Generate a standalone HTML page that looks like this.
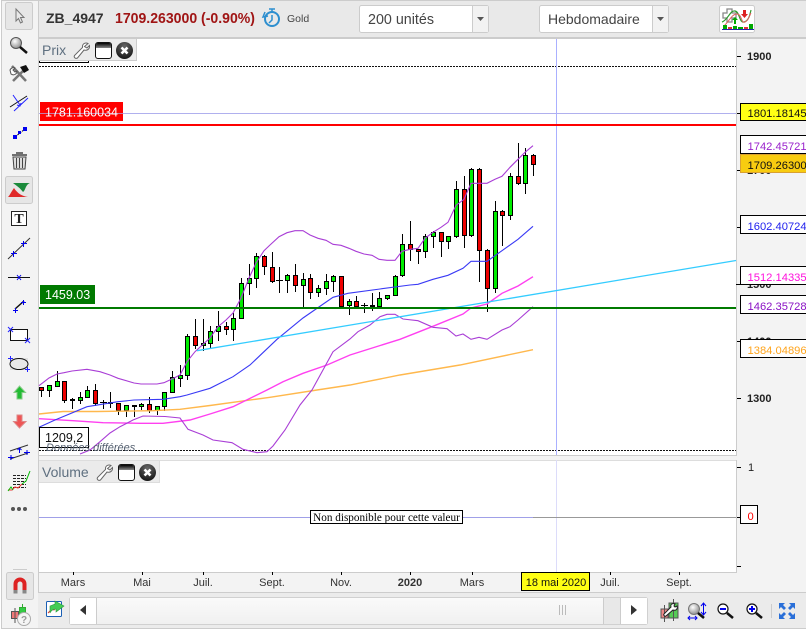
<!DOCTYPE html>
<html><head><meta charset="utf-8"><style>
html,body{margin:0;padding:0;background:#fff}
svg{display:block}
text{font-family:"Liberation Sans",sans-serif}
</style></head><body>
<svg xmlns="http://www.w3.org/2000/svg" width="806" height="631" viewBox="0 0 806 631">
<defs>
<linearGradient id="win" x1="0" y1="0" x2="0" y2="1"><stop offset="0" stop-color="#000"/><stop offset="1" stop-color="#888"/></linearGradient>
<radialGradient id="cl" cx=".5" cy=".25" r=".8"><stop offset="0" stop-color="#666"/><stop offset="1" stop-color="#111"/></radialGradient>
<radialGradient id="lens" cx=".4" cy=".35" r=".7"><stop offset="0" stop-color="#fff"/><stop offset="1" stop-color="#888"/></radialGradient>
<linearGradient id="thumb" x1="0" y1="0" x2="0" y2="1"><stop offset="0" stop-color="#fafafa"/><stop offset="1" stop-color="#f0f0f0"/></linearGradient>
<g id="wrench"><path d="M15 1.500c-3-1.500-6 .5-5.500 4L1.500 13.500c-1 2 1 3.500 3 2.500L11 8c3 1 6-1 5.500-4.500L14 6l-2.500-1.500z" fill="#fff" stroke="#666" stroke-width="1"/></g>
<g id="window"><rect x=".5" y=".5" width="16" height="16" rx="2.500" fill="#fff" stroke="#111"/><path d="M1 6V3a2 2 0 0 1 2-2h11a2 2 0 0 1 2 2v3z" fill="url(#win)"/></g>
<g id="close"><circle cx="8.500" cy="8.500" r="8.500" fill="url(#cl)"/><path d="M5.500 5.500l6 6M11.500 5.500l-6 6" stroke="#fff" stroke-width="2.600"/></g>
</defs>

<rect width="806" height="631" fill="#fff"/>
<!-- frame backgrounds -->
<rect x="1" y="0" width="805" height="629" fill="#f3f3f3"/>
<rect x="1" y="0" width="805" height="1" fill="#ccc"/>
<rect x="1" y="0" width="1" height="629" fill="#ccc"/>
<rect x="1" y="628" width="805" height="1" fill="#ccc"/>
<rect x="38" y="1" width="768" height="36" fill="#e9e9e9"/>
<rect x="38" y="37" width="768" height="2" fill="#ccc"/>
<rect x="38" y="0" width="1" height="629" fill="#ccc"/>

<!-- chart panes -->
<rect x="39" y="39" width="697" height="416" fill="#fff"/>
<rect x="39" y="455" width="697" height="1" fill="#ccc"/>
<rect x="39" y="460" width="697" height="112" fill="#fff"/>
<rect x="39" y="460" width="697" height="1" fill="#ddd"/>
<rect x="39" y="572" width="697" height="1" fill="#ccc"/>
<rect x="736" y="39" width="1" height="417" fill="#ccc"/>
<rect x="736" y="460" width="1" height="113" fill="#ccc"/>
<rect x="38" y="592" width="768" height="36" fill="#ebebeb"/>
<rect x="38" y="592" width="768" height="1" fill="#ccc"/>

<!-- reference lines under candles -->
<path d="M39 66.500H736M39 450.500H736" stroke="#111" stroke-width="1" stroke-dasharray="2 1" fill="none"/>
<path d="M39 113.500H736" stroke="#b0b0ee" fill="none"/>
<path d="M556.500 39V455" stroke="#aab0ff" fill="none"/>
<path d="M556.500 460V572" stroke="#dcdcfa" fill="none"/>

<!-- wicks -->
<path fill="none" stroke="#000" stroke-width="1" d="M41.500 387V397M49.500 385V397M57.500 371V387M64.500 381V403M72.500 398V409M80.500 392V404M87.500 386V398M95.500 384V406M103.500 400V409M100 402.500H107M110.500 392V408M118.500 403V415M126.500 405V417M134.500 405V417M141.500 403V410M149.500 397V413M157.500 406V415M164.500 392V411M172.500 371V393M180.500 365V387M187.500 334V380M195.500 319V349M203.500 319V351M210.500 326V348M218.500 311V341M226.500 322V335M233.500 313V341M241.500 278V319M249.500 264V295M256.500 253V288M264.500 255V275M272.500 252V283M279.500 267V293M276 280.500H283M287.500 274V293M295.500 264V292M303.500 273V308M310.500 274V299M318.500 285V297M326.500 274V295M333.500 275V292M341.500 276V307M349.500 299V315M356.500 296V307M364.500 303V313M361 305.500H368M372.500 293V311M379.500 292V307M387.500 295V300M395.500 275V296M402.500 234V277M410.500 221V261M418.500 249V264M425.500 234V258M433.500 231V248M441.500 232V257M448.500 236V249M456.500 181V238M464.500 176V248M471.500 168V237M479.500 168V282M487.500 249V312M495.500 201V293M502.500 210V246M510.500 173V220M518.500 143V185M525.500 148V194M533.500 154V176"/>
<!-- green bodies -->
<path fill="#00ee00" stroke="#000" stroke-width="1" d="M47.500 385.500h4v5h-4zM55.500 381.500h4v5h-4zM70.500 399.500h4v1h-4zM78.500 397.500h4v3h-4zM85.500 390.500h4v7h-4zM124.500 405.500h4v5h-4zM139.500 404.500h4v2h-4zM155.500 406.500h4v4h-4zM162.500 392.500h4v14h-4zM170.500 377.500h4v15h-4zM178.500 375.500h4v3h-4zM185.500 336.500h4v39h-4zM201.500 343.500h4v2h-4zM208.500 331.500h4v12h-4zM216.500 326.500h4v5h-4zM231.500 318.500h4v11h-4zM239.500 283.500h4v35h-4zM247.500 278.500h4v5h-4zM254.500 256.500h4v22h-4zM285.500 275.500h4v5h-4zM301.500 279.500h4v6h-4zM316.500 288.500h4v4h-4zM324.500 281.500h4v7h-4zM331.500 276.500h4v5h-4zM347.500 301.500h4v4h-4zM377.500 298.500h4v8h-4zM385.500 295.500h4v3h-4zM393.500 276.500h4v19h-4zM400.500 244.500h4v31h-4zM423.500 236.500h4v15h-4zM431.500 232.500h4v4h-4zM446.500 236.500h4v5h-4zM454.500 189.500h4v47h-4zM469.500 169.500h4v66h-4zM493.500 211.500h4v77h-4zM508.500 176.500h4v39h-4zM523.500 155.500h4v28h-4z"/>
<!-- red bodies -->
<path fill="#ee0000" stroke="#000" stroke-width="1" d="M39.500 387.500h4v3h-4zM62.500 381.500h4v19h-4zM93.500 390.500h4v13h-4zM108.500 402.500h4v1h-4zM116.500 403.500h4v7h-4zM132.500 405.500h4v1h-4zM147.500 404.500h4v6h-4zM193.500 336.500h4v9h-4zM224.500 326.500h4v3h-4zM262.500 256.500h4v10h-4zM270.500 267.500h4v14h-4zM293.500 275.500h4v10h-4zM308.500 278.500h4v14h-4zM339.500 276.500h4v30h-4zM354.500 301.500h4v5h-4zM370.500 305.500h4v1h-4zM408.500 244.500h4v5h-4zM416.500 249.500h4v2h-4zM439.500 232.500h4v9h-4zM462.500 189.500h4v46h-4zM477.500 169.500h4v81h-4zM485.500 250.500h4v38h-4zM500.500 211.500h4v4h-4zM516.500 176.500h4v7h-4zM531.500 155.500h4v9h-4z"/>

<!-- indicator lines -->
<path fill="none" stroke="#ffb84d" stroke-width="1.400" d="M39 414L63 411.500 97 411.500 153 410.700 180 409.300 210 405.500 270 397.300 317 390 350 385 400 375 460 365 533 349.700"/>
<path fill="none" stroke="#ff40f0" stroke-width="1.400" d="M39 418.700L73 420.700 103 422.700 140 423.300 163 423.300 190 420 210 414 233 406.700 267 390 283 381.700 303 373.300 327 365 350 355 400 339.300 432 326.700 463 314 471 308 487 304 502 293.300 518 286 533 276.700"/>
<path fill="none" stroke="#3a3af5" stroke-width="1.100" d="M39 427.300L55 420 87 406.700 118 401.700 134 400 163 399.300 180 396.700 187 395 210 388.300 233 376.700 250 365 277 339.300 303 318 333 297.300 348 293.300 380 289 410 285 418 284.300 433 279.300 448 275.300 463 268.300 471 261.300 487 261.300 502 250.700 518 239.300 533 226.300"/>
<path fill="none" stroke="#a93ed6" stroke-width="1.100" d="M39 385.700L49 378 57 374 64 372.700 72 371 87 369.300 100 371.700 110 375 118 378.300 134 383 141 384 157 384 164 382.700 172 379 180 375 187 361.700 195 351.700 203 344.300 210 338 218 326.700 226 320 233 313 241 298 249 278 256 263 264 250.700 270 245 279 236.700 287 232.700 295 230.700 303 230.700 310 235 318 238.300 326 240.300 333 244.300 341 245.300 349 248.300 356 251.300 364 254 372 255.300 379 259.300 387 260.300 395 260.300 402 251.300 410 249.300 418 248.300 425 238.300 433 232.300 441 227.300 448 222.300 456 205.300 464 199.300 471 183.300 487 183.300 495 179.300 502 176.300 510 167.300 518 159.300 525 152.300 533 145.700"/>
<path fill="none" stroke="#a93ed6" stroke-width="1.100" d="M80 454L90 450 100 441.700 110 433 120 426.700 133 420 143 416 165 416.500 180 418 188 429.300 203 435 213 440 232 442.700 243 449.300 257 452.700 267 451.700 273 446 285 430 300 405 312 390 333 351.700 350 339 358 331.700 370 325 380 316.700 387 314.300 395 314.300 403 319 418 320.700 433 327.300 447 328.700 456 336 463 334 471 339.300 479 337.300 487 339.300 502 330 510 326.700 518 320 533 306.700"/>
<path fill="none" stroke="#33ccff" stroke-width="1.300" d="M197 350.700L736 260.500"/>
<rect x="39" y="124" width="697" height="2" fill="#f00"/>
<rect x="39" y="307" width="697" height="2" fill="#007a00"/>

<!-- price tags on chart -->
<rect x="40" y="102" width="83" height="19" fill="#f00"/>
<path d="M39 113.500H123" stroke="#b0b0ee" opacity=".7"/>
<text x="45" y="116.500" font-size="12.500" fill="#fff">1781.160034</text>
<rect x="40" y="285" width="55" height="19" fill="#007a00"/>
<text x="45" y="299" font-size="12.500" fill="#fff">1459.03</text>
<rect x="39.500" y="427.500" width="49" height="20" fill="#fff" stroke="#000"/>
<text x="45" y="442" font-size="12.500" fill="#111">1209,2</text>
<text x="46" y="451" font-size="11" font-style="italic" fill="#556070">Données différées</text>

<!-- Prix legend -->
<path d="M39.500 58V62.500H88.500V58" fill="none" stroke="#000"/>
<rect x="39" y="39" width="97" height="21" fill="#ebebeb"/>
<rect x="39" y="60" width="98" height="1" fill="#ccc"/>
<rect x="136" y="39" width="1" height="22" fill="#ccc"/>
<text x="42" y="55" font-size="14" fill="#5f7080">Prix</text>
<use href="#wrench" x="73" y="42"/>
<use href="#window" x="95" y="42"/>
<use href="#close" x="116" y="42"/>
<!-- Volume legend -->
<rect x="39" y="461" width="121" height="21" fill="#ebebeb"/>
<rect x="39" y="482" width="121" height="1" fill="#ddd"/>
<rect x="159" y="461" width="1" height="22" fill="#ddd"/>
<text x="42" y="477" font-size="14" fill="#5f7080">Volume</text>
<use href="#wrench" x="96" y="464"/>
<use href="#window" x="118" y="464"/>
<use href="#close" x="139" y="464"/>

<!-- volume line -->
<path d="M39 517.500H533" stroke="#a0a0e8" fill="none"/>
<path d="M533 517.500H736" stroke="#999" fill="none"/>
<rect x="310.500" y="510.500" width="152" height="13" fill="#fff" stroke="#000"/>
<text x="386.500" y="521" font-size="11.200" text-anchor="middle" style="font-family:'Liberation Serif',serif" fill="#000">Non disponible pour cette valeur</text>

<!-- right scale -->
<g stroke="#000" fill="none"><path d="M737 56.500h4M737 113.500h4M737 170.500h4M737 227.500h4M736 284.500h11M737 341.500h7M737 398.500h4M737 467.500h4M737 517.500h4M737 566.500h4"/></g>
<g font-size="11" font-weight="bold" fill="#222">
<text x="747" y="60">1900</text><text x="747" y="174">1700</text><text x="747" y="288">1500</text><text x="747" y="345">1400</text><text x="747" y="402">1300</text>
</g>
<text x="748" y="471" font-size="11" fill="#222">1</text>
<g stroke="#000" stroke-width="1">
<rect x="740.500" y="103.500" width="70" height="17" fill="#ffff14"/>
<rect x="740.500" y="135.500" width="70" height="18" fill="#fff"/>
<rect x="740.500" y="154.500" width="70" height="18" fill="#f8cc10" stroke="#d9a030"/>
<rect x="740.500" y="215.500" width="70" height="18" fill="#fff"/>
<rect x="740.500" y="266.500" width="70" height="18" fill="#fff"/>
<rect x="740.500" y="295.500" width="70" height="18" fill="#fff"/>
<rect x="740.500" y="339.500" width="70" height="18" fill="#fff"/>
<rect x="740.500" y="505.500" width="17" height="18" fill="#fff"/>
</g>
<g font-size="11.200">
<text x="747.500" y="117" fill="#111">1801.181455</text>
<text x="747.500" y="150" fill="#9a22cc">1742.457214</text>
<text x="747.500" y="169" fill="#111">1709.263000</text>
<text x="747.500" y="230" fill="#2222ee">1602.407248</text>
<text x="747.500" y="281" fill="#ff11dd">1512.143359</text>
<text x="747.500" y="310" fill="#8a12c4">1462.357282</text>
<text x="747.500" y="354" fill="#ffa51e">1384.048960</text>
<text x="747.500" y="520" fill="#f00">0</text>
</g>

<!-- time axis -->
<path d="M73.500 572v3M142.500 572v3M203.500 572v3M272.500 572v3M341.500 572v3M410.500 572v3M472.500 572v3M541.500 572v3M610.500 572v3M679.500 572v3" stroke="#000" fill="none"/>
<g font-size="11" fill="#333" text-anchor="middle">
<text x="73" y="586">Mars</text><text x="142" y="586">Mai</text><text x="203" y="586">Juil.</text><text x="272" y="586">Sept.</text><text x="341" y="586">Nov.</text><text x="410" y="586" font-weight="bold">2020</text><text x="472" y="586">Mars</text><text x="610" y="586">Juil.</text><text x="679" y="586">Sept.</text>
</g>
<rect x="521.500" y="572.500" width="68" height="18" fill="#ffff14" stroke="#000"/>
<text x="556" y="586" font-size="11" text-anchor="middle" fill="#111">18 mai 2020</text>

<!-- top bar -->
<text x="46" y="23" font-size="14" font-weight="bold" fill="#333">ZB_4947</text>
<text x="115" y="23" font-size="14.800" font-weight="bold" fill="#a01515" textLength="140" lengthAdjust="spacingAndGlyphs">1709.263000 (-0.90%)</text>
<g fill="none" stroke="#2e8fcf" stroke-width="2">
<circle cx="272" cy="19" r="7"/>
<path d="M272 15v5l-3 3M269 9h6M272 9v3" stroke-width="1.500"/>
<path d="M265 12l-2 5 5-1" stroke-width="1.500"/>
</g>
<text x="287" y="22" font-size="10.500" fill="#444">Gold</text>

<rect x="359.500" y="5.500" width="129" height="27" rx="2" fill="#fff" stroke="#ccc"/>
<rect x="473" y="6" width="15" height="26" fill="#f2f2f2"/>
<path d="M472.500 6v26" stroke="#ccc"/>
<path d="M477 17h7l-3.500 4z" fill="#555"/>
<text x="368" y="24" font-size="14.300" fill="#444">200 unités</text>
<rect x="539.500" y="5.500" width="129" height="27" rx="2" fill="#fff" stroke="#ccc"/>
<rect x="653" y="6" width="15" height="26" fill="#f2f2f2"/>
<path d="M652.500 6v26" stroke="#ccc"/>
<path d="M657 17h7l-3.500 4z" fill="#555"/>
<text x="548" y="24" font-size="14" fill="#444">Hebdomadaire</text>

<!-- indicators button -->
<rect x="719.500" y="5.500" width="35" height="27" rx="2" fill="#fff" stroke="#ccc"/>
<path d="M727 9h5v4h4v5h-4v4h-5v-4h-4v-5h4z" fill="#fff" stroke="#888" stroke-width="1.300"/>
<path d="M722 22c6-2 8-12 13-11s4 12 9 11 6-8 7-12" fill="none" stroke="#2c9a2c" stroke-width="1.200"/>
<path d="M724 26c6-6 8-12 13-12s4 10 8 8 5-8 6-9" fill="none" stroke="#e06060" stroke-width="1"/>
<path d="M735 17l3 3h-2v4h-2v-4h-2z" fill="#0a0"/>
<path d="M743 10h3v4h2l-3.500 4-3.500-4h2z" fill="#d22"/>
<g fill="#0a0"><rect x="723" y="25" width="4" height="4"/><rect x="733" y="26" width="4" height="3"/><rect x="749" y="24" width="4" height="5"/></g>
<g fill="#d33"><rect x="728" y="27" width="4" height="2"/><rect x="744" y="27" width="4" height="2"/></g>
<rect x="738" y="27" width="5" height="2" fill="#0a0"/>
<path d="M722 29.500h32" stroke="#22a" stroke-width="1"/>

<!-- left toolbar -->
<rect x="5.500" y="2.500" width="27" height="27" rx="2" fill="#e6e6e6" stroke="#ccc"/>
<path d="M16 9l8 8.500h-3.500l2 4.500-2 1-2-4.500-2.500 2.500z" fill="#e8e8e8" stroke="#777"/>

<circle cx="16" cy="43" r="5.500" fill="url(#lens)" stroke="#555"/>
<path d="M20 47l7 6" stroke="#111" stroke-width="2.500"/>

<path d="M12 66l14 15M25 69L13 81" stroke="#777" stroke-width="2.500"/>
<path d="M10 70c1-2 3-3 5-2l-2 2 2 2 2-1c0 3-3 5-6 3z" fill="#fff" stroke="#555"/>
<path d="M20 67l6-2 3 5-5 3z" fill="#111"/>

<path d="M10 107L27 96" stroke="#111" fill="none"/>
<path d="M14 111L28 98" stroke="#22f" fill="none"/>
<path d="M13 95L20 105M17 105l3 1 1-3" stroke="#22f" fill="none"/>

<path d="M15 137L25 129" stroke="#111" stroke-dasharray="2 1"/>
<rect x="13" y="135" width="4" height="4" fill="#00e"/><rect x="23" y="127" width="4" height="4" fill="#00e"/><rect x="18" y="131" width="3" height="3" fill="#00e"/>

<path d="M13 157h13l-1 12h-11z" fill="#ddd" stroke="#444"/>
<path d="M12 155h15M16 153h7" stroke="#444" stroke-width="1.500"/>
<path d="M16.500 158v10M19.500 158v10M22.500 158v10" stroke="#444"/>

<rect x="5.500" y="176.500" width="27" height="27" rx="2" fill="#e6e6e6" stroke="#ccc"/>
<path d="M13 183h17c-5 2-4 7-7 9-3-4-6-6-10-9z" fill="#1a8a3a"/>
<path d="M8 197h20c-6-1-10-3-14-9-3 4-4 7-6 9z" fill="#e02a2a"/>

<rect x="11.500" y="211.500" width="15" height="14" fill="#fff" stroke="#222"/>
<text x="19" y="223" font-size="14" font-weight="bold" text-anchor="middle" style="font-family:'Liberation Serif',serif" fill="#222">T</text>

<path d="M8 259L30 238" stroke="#333"/>
<path d="M11 253.500h6M13.500 251v6M21 243.500h6M23.500 241v6" stroke="#00e"/>

<path d="M8 277.500H30" stroke="#111"/>
<path d="M17 275l4 5M21 275l-4 5" stroke="#00e"/>

<path d="M15 309L24 301" stroke="#111" stroke-width="1.500"/>
<path d="M13 310.500h5M15.500 308v5M21 302.500h5M23.500 300v5" stroke="#00e"/>

<rect x="10.500" y="329.500" width="17" height="11" fill="#fff" stroke="#111"/>
<path d="M8 327l5 5M13 327l-5 5M25 338l5 5M30 338l-5 5" stroke="#22f"/>

<rect x="10" y="358" width="18" height="12" fill="#e0e0e0"/>
<ellipse cx="19" cy="364" rx="9" ry="5.500" fill="#e8e8e8" stroke="#111"/>
<path d="M8 358.500h5M10.500 356v5M25 369.500h5M27.500 367v5" stroke="#22f"/>

<path d="M19.500 386l6 6.500h-3.500V399h-5v-6.500H14z" fill="#22bb33" stroke="#8c8"/>
<path d="M17 415h5v6.500h4l-6.500 6.500-6-6.500h3.500z" fill="#ee5555" stroke="#d88"/>

<path d="M10 451L28 445M10 459L28 453" stroke="#333"/>
<path d="M8 457.500h6M11 455v5M24 452.500h6M27 450v5" stroke="#00e"/>
<path d="M19.500 448v5M17.500 450l2-2 2 2" stroke="#00e" fill="none"/>

<path d="M13 475.500h13M13 478.500h13M13 481.500h13M13 484.500h13M13 487.500h13" stroke="#222" stroke-dasharray="3 1"/>
<path d="M8 490l4 0 3-3 3 1 4-4" stroke="#e33" fill="none"/>
<path d="M22 484l4-3 4-10" stroke="#0b0" fill="none"/>
<path d="M8 491l3-4 2 3" stroke="#0b0" fill="none"/>

<circle cx="13" cy="509" r="2" fill="#555"/><circle cx="19" cy="509" r="2" fill="#555"/><circle cx="25" cy="509" r="2" fill="#555"/>

<path d="M13 569.500h14" stroke="#ccc"/>
<rect x="6.500" y="572.500" width="27" height="27" rx="2" fill="#e6e6e6" stroke="#ccc"/>
<path d="M15.500 593v-9a4.500 4.500 0 0 1 9 0v9" fill="none" stroke="#d22" stroke-width="4"/>
<path d="M13.500 590h4v3.500h-4zM22.500 590h4v3.500h-4z" fill="#888"/>

<rect x="11.500" y="611.500" width="7" height="7" fill="#ee7777" stroke="#555"/>
<path d="M15 608v15" stroke="#555"/>
<rect x="19.500" y="607.500" width="6" height="8" fill="#33cc44" stroke="#3a3"/>
<path d="M22.500 604v4" stroke="#3a3"/>
<circle cx="24" cy="619" r="6.500" fill="#f5f5f5" stroke="#aaa"/>
<text x="24" y="623" font-size="10" font-weight="bold" text-anchor="middle" fill="#999">?</text>

<!-- bottom bar -->
<rect x="46.500" y="601.500" width="15" height="15" rx="1" fill="#fff" stroke="#1a5fb4"/>
<path d="M48 613l4-4 2 1 4-5" stroke="#d33" fill="none"/>
<path d="M50 606l5-2v-3l9 5-8 6v-3c-3 0-5 2-6 4z" fill="#44cc55" stroke="#2a9a3a" stroke-width=".6"/>

<rect x="69.500" y="597.500" width="578" height="27" rx="2" fill="#e8e8e8" stroke="#d0d0d0"/>
<rect x="70" y="598" width="26" height="26" fill="#fff"/>
<path d="M96.500 598v26" stroke="#ccc"/>
<path d="M86 605v10l-6-5z" fill="#333"/>
<rect x="97" y="598" width="506" height="26" fill="url(#thumb)"/>
<path d="M603.500 598v26" stroke="#ccc"/>
<path d="M620.500 598v26" stroke="#ccc"/>
<rect x="621" y="598" width="26" height="26" fill="#fff"/>
<path d="M631 605v10l6-5z" fill="#333"/>
<path d="M559.500 605v10M562.500 605v10M565.500 605v10" stroke="#bbb"/>

<!-- bottom right icons -->
<rect x="661" y="609" width="7" height="9" fill="#e88" stroke="#555"/>
<rect x="669" y="603" width="9" height="15" fill="#55cc55" stroke="#555"/>
<path d="M664.500 605v17M673.500 599v22" stroke="#555"/>
<path d="M675 604c-2-1-5 0-4 3l-7 7c-1 1 1 3 2 2l7-6c3 1 5-1 4-4l-2 1-1-1z" fill="#fff" stroke="#222"/>

<circle cx="694" cy="609" r="5.500" fill="url(#lens)" stroke="#777"/>
<path d="M698 613l6 5" stroke="#111" stroke-width="2.500"/>
<path d="M703.500 604v10M701 606l2.500-3 2.500 3M701 612l2.500 3 2.500-3" stroke="#00e" fill="none"/>
<path d="M688 618h9M690 616l-2 2 2 2M695 616l2 2-2 2" stroke="#00e" fill="none"/>

<circle cx="723" cy="609" r="5" fill="#fff" stroke="#111" stroke-width="1.200"/>
<path d="M720 609h6" stroke="#00e" stroke-width="2"/>
<path d="M727 613l6 5" stroke="#111" stroke-width="2.500"/>
<circle cx="752" cy="609" r="5" fill="#fff" stroke="#111" stroke-width="1.200"/>
<path d="M749 609h6M752 606v6" stroke="#00e" stroke-width="2"/>
<path d="M756 613l6 5" stroke="#111" stroke-width="2.500"/>
<path d="M771.500 604v14" stroke="#ccc"/>
<g fill="#2a6fd8">
<path d="M779 603h6l-2 2 3 3-2 2-3-3-2 2z"/>
<path d="M795 603h-6l2 2-3 3 2 2 3-3 2 2z"/>
<path d="M779 619h6l-2-2 3-3-2-2-3 3-2-2z"/>
<path d="M795 619h-6l2-2-3-3 2-2 3 3 2-2z"/>
</g>
</svg>
</body></html>
